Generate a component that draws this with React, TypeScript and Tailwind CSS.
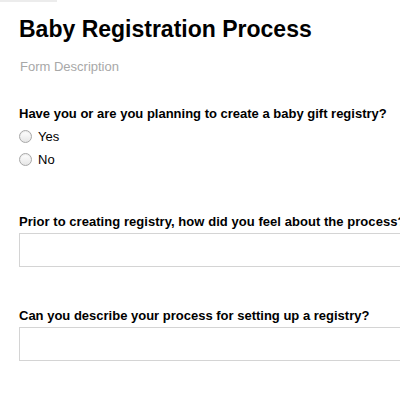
import React from "react";

function Radio({ label }: { label: string }) {
  return (
    <label className="flex items-center gap-[6px] h-[23px]">
      <span className="w-[13px] h-[13px] rounded-full border border-[#a8a8a8] bg-gradient-to-b from-[#ffffff] to-[#e6e6e6] shadow-[inset_0_1px_1px_rgba(0,0,0,0.08)]" />
      <span className="text-[13px] text-black">{label}</span>
    </label>
  );
}

export default function App() {
  return (
    <div className="w-[400px] h-[400px] bg-white overflow-hidden relative" style={{ fontFamily: '"Liberation Sans", Arial, sans-serif' }}>
      <div className="absolute left-0 top-0 w-[57px] h-[2px] bg-[#ececec]" />
      <div className="pl-[19px] pt-[15px] w-[600px]">
        <h1 className="text-[23px] font-bold leading-[28px] text-black">Baby Registration Process</h1>
        <div className="mt-[16px] text-[13px] text-[#a8a8a8] pl-[1px] leading-[16px]">Form Description</div>
        <div className="mt-[31px]">
          <div className="text-[13px] font-bold text-black leading-[16px]">Have you or are you planning to create a baby gift registry?</div>
          <div className="mt-[3px] flex flex-col">
            <Radio label="Yes" />
            <Radio label="No" />
          </div>
        </div>
        <div className="mt-[43px]">
          <div className="text-[13px] font-bold text-black leading-[16px] tracking-[0.05px]">Prior to creating registry, how did you feel about the process?</div>
          <div className="mt-[3px] h-[34px] w-[500px] border border-[#d4d4d4]" />
        </div>
        <div className="mt-[41px]">
          <div className="text-[13px] font-bold text-black leading-[16px]">Can you describe your process for setting up a registry?</div>
          <div className="mt-[3px] h-[34px] w-[500px] border border-[#d4d4d4]" />
        </div>
      </div>
    </div>
  );
}
